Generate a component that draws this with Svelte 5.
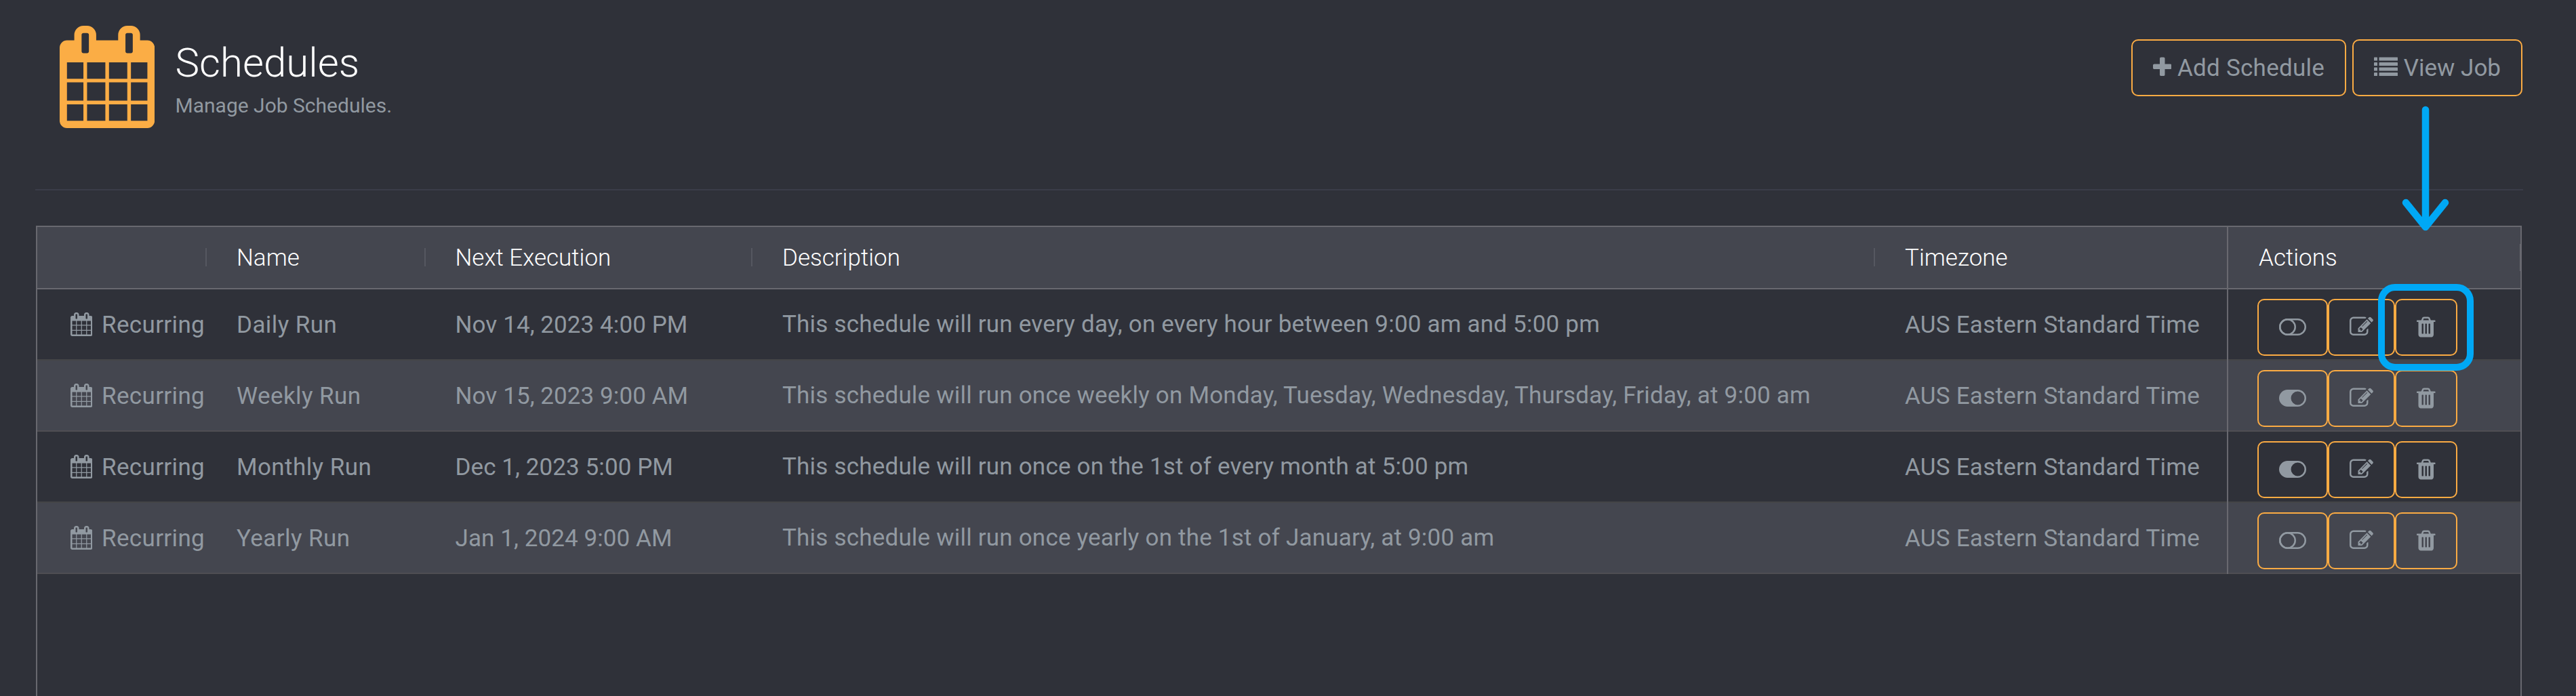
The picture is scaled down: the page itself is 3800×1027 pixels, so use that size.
<script>
	const schedules = [
		{
			name: 'Daily Run',
			next: 'Nov 14, 2023 4:00 PM',
			description: 'This schedule will run every day, on every hour between 9:00 am and 5:00 pm',
			enabled: false
		},
		{
			name: 'Weekly Run',
			next: 'Nov 15, 2023 9:00 AM',
			description: 'This schedule will run once weekly on Monday, Tuesday, Wednesday, Thursday, Friday, at 9:00 am',
			enabled: true
		},
		{
			name: 'Monthly Run',
			next: 'Dec 1, 2023 5:00 PM',
			description: 'This schedule will run once on the 1st of every month at 5:00 pm',
			enabled: true
		},
		{
			name: 'Yearly Run',
			next: 'Jan 1, 2024 9:00 AM',
			description: 'This schedule will run once yearly on the 1st of January, at 9:00 am',
			enabled: false
		}
	];
	const timezone = 'AUS Eastern Standard Time';
</script>

{#snippet calendar()}
	<svg class="icon" viewBox="64 0 1664 1792" fill="currentColor">
		<path d="M192 1664h288v-288h-288v288zm352 0h320v-288h-320v288zm-352-352h288v-320h-288v320zm352 0h320v-320h-320v320zm-352-384h288v-288h-288v288zm736 736h320v-288h-320v288zm-384-736h320v-288h-320v288zm768 736h288v-288h-288v288zm-384-352h320v-320h-320v320zm-352-864v-288q0-13-9.5-22.5t-22.5-9.5h-64q-13 0-22.5 9.5t-9.5 22.5v288q0 13 9.5 22.5t22.5 9.5h64q13 0 22.5-9.5t9.5-22.5zm736 864h288v-320h-288v320zm-384-384h320v-288h-320v288zm384 0h288v-288h-288v288zm32-480v-288q0-13-9.5-22.5t-22.5-9.5h-64q-13 0-22.5 9.5t-9.5 22.5v288q0 13 9.5 22.5t22.5 9.5h64q13 0 22.5-9.5t9.5-22.5zm384-64v1280q0 52-38 90t-90 38h-1408q-52 0-90-38t-38-90v-1280q0-52 38-90t90-38h128v-96q0-66 47-113t113-47h64q66 0 113 47t47 113v96h384v-96q0-66 47-113t113-47h64q66 0 113 47t47 113v96h128q52 0 90 38t38 90z"></path>
	</svg>
{/snippet}

<div class="page">
	<header>
		<div class="heading">
			<span class="logo">{@render calendar()}</span>
			<div>
				<h1>Schedules</h1>
				<p>Manage Job Schedules.</p>
			</div>
		</div>
		<div class="buttons">
			<button class="add">
				<svg class="icon" viewBox="192 0 1408 1792" fill="currentColor">
					<path d="M1600 736v192q0 40-28 68t-68 28h-416v416q0 40-28 68t-68 28h-192q-40 0-68-28t-28-68v-416h-416q-40 0-68-28t-28-68v-192q0-40 28-68t68-28h416v-416q0-40 28-68t68-28h192q40 0 68 28t28 68v416h416q40 0 68 28t28 68z"></path>
				</svg>
				Add Schedule
			</button>
			<button>
				<svg class="icon" viewBox="0 0 1792 1792" fill="currentColor">
					{#each [128, 512, 896, 1280] as y}
						<rect x="0" {y} width="256" height="256" rx="32"></rect>
						<rect x="384" {y} width="1408" height="256" rx="32"></rect>
					{/each}
				</svg>
				View Job
			</button>
		</div>
	</header>

	<div class="grid">
		<div class="row head">
			<div class="cell"></div>
			<div class="cell">Name</div>
			<div class="cell">Next Execution</div>
			<div class="cell">Description</div>
			<div class="cell">Timezone</div>
			<div class="cell actions">Actions</div>
		</div>
		{#each schedules as schedule (schedule.name)}
			<div class="row">
				<div class="cell type">{@render calendar()}<span>Recurring</span></div>
				<div class="cell name">{schedule.name}</div>
				<div class="cell next">{schedule.next}</div>
				<div class="cell description">{schedule.description}</div>
				<div class="cell timezone">{timezone}</div>
				<div class="cell actions">
					<button aria-label="Toggle" on:click={() => {}}>
						<svg class="icon" viewBox="0 0 2048 1792" fill="currentColor">
							{#if schedule.enabled}
								<path fill-rule="evenodd" d="M640 256h768a640 640 0 0 1 0 1280h-768a640 640 0 0 1 0-1280zM1408 384a512 512 0 0 0 0 1024a512 512 0 0 0 0-1024z"></path>
							{:else}
								<g fill="none" stroke="currentColor" stroke-width="128">
									<rect x="64" y="320" width="1920" height="1152" rx="576"></rect>
									<circle cx="640" cy="896" r="576"></circle>
								</g>
							{/if}
						</svg>
					</button>
					<button aria-label="Edit">
						<svg class="icon" viewBox="0 0 1792 1792" fill="currentColor">
							<path d="M888 1184l116-116-152-152-116 116v56h96v96h56zm440-720q-16-16-33 1l-350 350q-17 17-1 33t33-1l350-350q17-17 1-33zm80 594v190q0 119-84.5 203.5t-203.5 84.5h-832q-119 0-203.5-84.5t-84.5-203.5v-832q0-119 84.5-203.5t203.5-84.5h832q63 0 117 25 15 7 18 23 3 17-9 29l-49 49q-14 14-32 8-23-6-45-6h-832q-66 0-113 47t-47 113v832q0 66 47 113t113 47h832q66 0 113-47t47-113v-126q0-13 9-22l64-64q15-15 35-7t20 29zm-96-738l288 288-672 672h-288v-288zm444 132l-92 92-288-288 92-92q28-28 68-28t68 28l152 152q28 28 28 68t-28 68z"></path>
						</svg>
					</button>
					<button aria-label="Delete">
						<svg class="icon" viewBox="192 0 1408 1792" fill="currentColor">
							<path d="M704 1376v-704q0-14-9-23t-23-9h-64q-14 0-23 9t-9 23v704q0 14 9 23t23 9h64q14 0 23-9t9-23zm256 0v-704q0-14-9-23t-23-9h-64q-14 0-23 9t-9 23v704q0 14 9 23t23 9h64q14 0 23-9t9-23zm256 0v-704q0-14-9-23t-23-9h-64q-14 0-23 9t-9 23v704q0 14 9 23t23 9h64q14 0 23-9t9-23zm-544-992h448l-48-117q-7-9-17-11h-317q-10 2-17 11zm928 32v64q0 14-9 23t-23 9h-96v948q0 83-47 143.5t-113 60.5h-832q-66 0-113-58.5t-47-141.5v-952h-96q-14 0-23-9t-9-23v-64q0-14 9-23t23-9h309l70-167q15-37 54-63t79-26h320q40 0 79 26t54 63l70 167h309q14 0 23 9t9 23z"></path>
						</svg>
					</button>
				</div>
			</div>
		{/each}
	</div>

	<svg class="arrow" width="80" height="190" viewBox="0 0 80 190">
		<path d="M40 10V183M11 147L40 183L69 147"></path>
	</svg>
	<div class="highlight"></div>
</div>

<style>
	:global(body) {
		background: #2f3139;
	}

	.page {
		position: relative;
		box-sizing: border-box;
		height: 1027px;
		padding: 0 78px 0 52px;
		overflow: hidden;
		background: #2f3139;
		color: #9199a1;
		font-family: Roboto, sans-serif;
		font-size: 35px;
	}

	.icon {
		height: 1em;
		vertical-align: -0.143em;
	}

	header {
		display: flex;
		justify-content: space-between;
		box-sizing: border-box;
		height: 281px;
		border-bottom: 2px solid #3b3d49;
	}

	.heading {
		display: flex;
		padding: 38px 0 0 35.5px;
	}

	.logo {
		width: 171px;
		color: #fbad45;
		font-size: 151px;
		line-height: 0;
	}

	.logo .icon {
		vertical-align: top;
	}

	h1 {
		margin: 20px 0 0;
		color: #fff;
		font-size: 60px;
		font-weight: 300;
		line-height: 70px;
	}

	p {
		margin: 8px 0 0;
		font-size: 30px;
		line-height: 40px;
	}

	.buttons {
		display: flex;
		gap: 9px;
		padding: 58px 1px 0 0;
	}

	button {
		box-sizing: border-box;
		height: 84px;
		margin: 0;
		padding: 16px 30px 14px;
		border: 2px solid #fbab43;
		border-radius: 10px;
		background: transparent;
		color: inherit;
		font: inherit;
		line-height: 50px;
		white-space: nowrap;
		cursor: pointer;
	}

	.add {
		letter-spacing: 0.25px;
	}

	.grid {
		height: 720px;
		margin: 52px 2px 0 1px;
		border: 2px solid #68686f;
	}

	.row {
		display: grid;
		grid-template-columns: 250px 322.5px 482.5px 1656px 519px 1fr;
		height: 103px;
		border-bottom: 2px solid #444547;
		line-height: 105px;
		white-space: nowrap;
	}

	.row:nth-child(odd) {
		background: #44464f;
		border-bottom-color: #4f4e53;
	}

	.row.head {
		height: 90px;
		border-bottom-color: #68686f;
		color: #fff;
		font-weight: 300;
		line-height: 92px;
	}

	.cell {
		padding-left: 44px;
	}

	.cell.type {
		padding-left: 48.5px;
		letter-spacing: 0.35px;
	}

	.type span {
		margin-left: 14px;
	}

	.name {
		letter-spacing: 0.42px;
	}

	.next {
		letter-spacing: 0.08px;
	}

	.description {
		letter-spacing: 0.2px;
		line-height: 103px;
	}

	.timezone {
		letter-spacing: 0.25px;
	}

	.head .cell:nth-child(-n + 4) {
		background: linear-gradient(#555760, #555760) no-repeat right 31px / 2px 27px;
	}

	.cell.actions {
		display: flex;
		align-items: flex-start;
		padding: 14px 0 0 43px;
		border-left: 2px solid #68686f;
	}

	.head .cell.actions {
		padding: 0 0 0 45px;
		background: linear-gradient(#68686f, #68686f) no-repeat right 25px / 1px 40px;
	}

	.arrow {
		position: absolute;
		left: 3538px;
		top: 152px;
		fill: none;
		stroke: #00a8f5;
		stroke-width: 10.5px;
		stroke-linecap: round;
		stroke-linejoin: round;
	}

	.highlight {
		position: absolute;
		left: 3508px;
		top: 419px;
		box-sizing: border-box;
		width: 141px;
		height: 128px;
		border: 10px solid #00a8f5;
		border-radius: 25px;
	}
</style>
